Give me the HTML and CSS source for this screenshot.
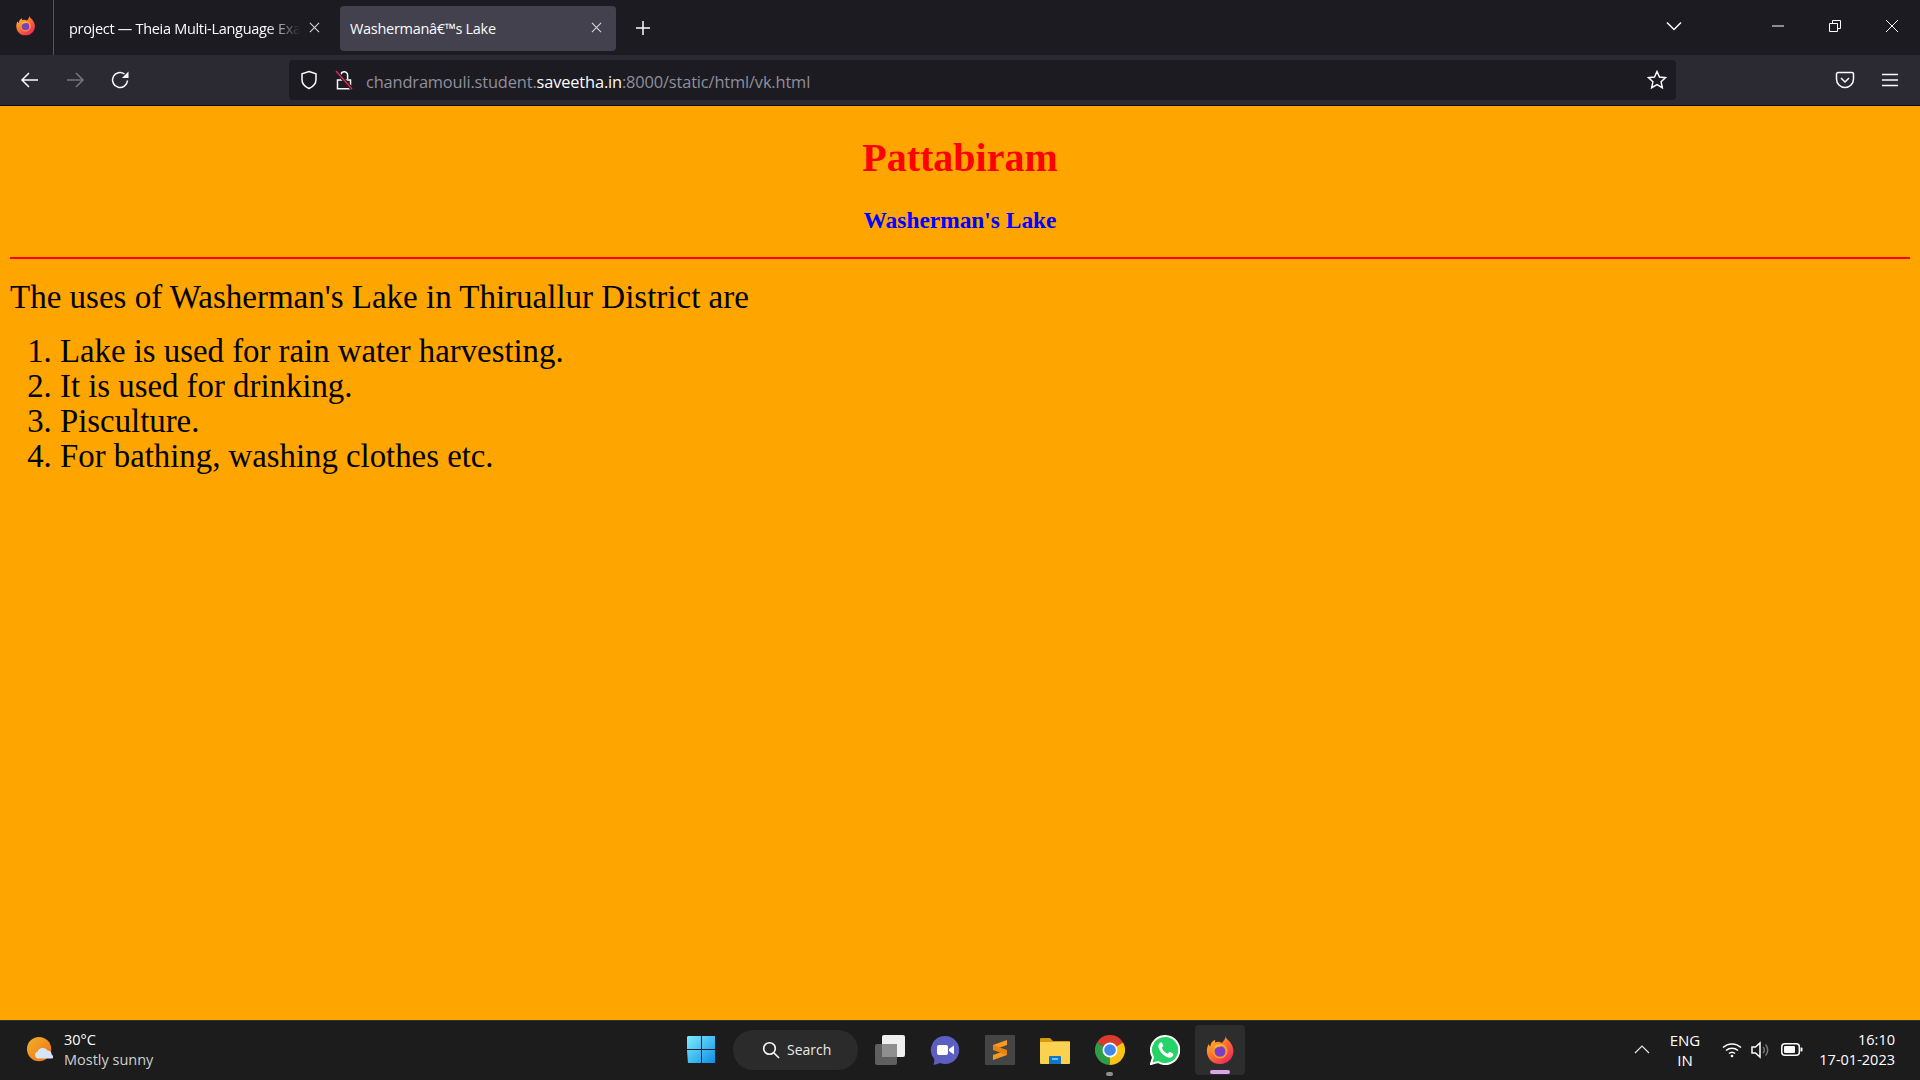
FILE: index.html
```html
<!DOCTYPE html>
<html lang="en">
<head>
    <meta charset="UTF-8">
    <title>Washerman's Lake</title>
    <link rel="stylesheet" href="styles.css">
</head>
<body>

    <!-- browser tabs -->
    <div class="tabbar">
        <div class="app-menu">
            <svg class="icon-fx-small" viewBox="0 0 32 32"><use href="#firefox"/></svg>
        </div>
        <div class="tab">
            <span class="tab-title fade">project — Theia Multi-Language Exa</span>
            <svg class="tab-close" viewBox="0 0 12 12"><path d="M1 1l10 10M11 1L1 11"/></svg>
        </div>
        <div class="tab active">
            <span class="tab-title">Washermanâ€™s Lake</span>
            <svg class="tab-close" viewBox="0 0 12 12"><path d="M1 1l10 10M11 1L1 11"/></svg>
        </div>
        <svg class="new-tab" viewBox="0 0 16 16"><path d="M8 1v14M1 8h14"/></svg>
        <div class="tabbar-right">
            <svg class="tab-list" viewBox="0 0 16 10"><path d="M1 1.500l7 7 7-7"/></svg>
            <div class="win-buttons">
                <svg viewBox="0 0 12 12"><path d="M0 6h12"/></svg>
                <svg viewBox="0 0 12 12"><path d="M.5 3.500h8v8h-8zM3.500 3.500v-3h8v8h-3"/></svg>
                <svg viewBox="0 0 12 12"><path d="M0 0l12 12M12 0L0 12"/></svg>
            </div>
        </div>
    </div>

    <!-- toolbar with address bar -->
    <div class="toolbar">
        <div class="nav-buttons">
            <svg viewBox="0 0 20 20"><path d="M18 10H2.500M9 3l-7 7 7 7"/></svg>
            <svg class="disabled" viewBox="0 0 20 20"><path d="M2 10h15.500M11 3l7 7-7 7"/></svg>
            <svg viewBox="0 0 20 20"><path d="M17.500 10.500a7.500 7.500 0 1 1-3-6.500"/><path class="solid" d="M18.500 1.500v6.500h-6.500z"/></svg>
        </div>
        <div class="urlbar">
            <svg class="url-icon" viewBox="0 0 20 20"><path d="M10 1.500l7 2.200v6c0 4.300-3 7-7 8.800-4-1.800-7-4.500-7-8.800v-6z"/></svg>
            <svg class="url-icon lock" viewBox="0 0 20 20">
                <path d="M7 9V5a3.300 3.300 0 0 1 6.600 0v4M3.500 10h13v8.800h-13z"/>
                <path class="slash-gap" d="M2 1l16 18"/>
                <path class="slash" d="M2 1l16 18"/>
            </svg>
            <span class="url">chandramouli.student.<b>saveetha.in</b>:8000/static/html/vk.html</span>
            <svg class="url-icon star" viewBox="0 0 20 20"><path d="M10 1.500l2.500 5.500 6 .7-4.400 4.100 1.200 5.900-5.300-3-5.300 3 1.200-5.900L1.500 7.700l6-.7z"/></svg>
        </div>
        <div class="toolbar-right">
            <svg viewBox="0 0 20 20"><path d="M3 2.500h14a1.500 1.500 0 0 1 1.500 1.500v5a8.500 8.500 0 0 1-17 0V4A1.500 1.500 0 0 1 3 2.500z"/><path d="M6 8l4 4 4-4"/></svg>
            <svg viewBox="0 0 20 20"><path d="M2 4.500h16M2 10h16M2 15.500h16"/></svg>
        </div>
    </div>

    <!-- the page itself -->
    <main class="page">
        <h1>Pattabiram</h1>
        <h3>Washerman's Lake</h3>
        <hr>
        <p class="intro">The uses of Washerman's Lake in Thiruallur District are</p>
        <ol class="uses">
            <li>Lake is used for rain water harvesting.</li>
            <li>It is used for drinking.</li>
            <li>Pisculture.</li>
            <li>For bathing, washing clothes etc.</li>
        </ol>
    </main>

    <!-- windows taskbar -->
    <footer class="taskbar">
        <div class="weather">
            <svg class="weather-icon" viewBox="0 0 30 30">
                <defs>
                    <linearGradient id="sun" x1="0" y1="0" x2="1" y2="1">
                        <stop offset="0" stop-color="#f0b32c"/>
                        <stop offset="1" stop-color="#f26c12"/>
                    </linearGradient>
                </defs>
                <circle cx="14" cy="14" r="13" fill="url(#sun)"/>
                <path d="M12 24a4 4 0 0 1 .5-7.500 6 6 0 0 1 10.500-1 4.500 4.500 0 0 1 4.500 4.300 3.200 3.200 0 0 1 1 4.200z" fill="#d5e4f7"/>
            </svg>
            <div class="weather-text">
                <div class="temp">30°C</div>
                <div class="sky">Mostly sunny</div>
            </div>
        </div>

        <div class="task-icons">
            <svg class="start" viewBox="0 0 30 30">
                <defs>
                    <linearGradient id="win" x1="0" y1="0" x2="1" y2="1">
                        <stop offset="0" stop-color="#7fecfd"/>
                        <stop offset="1" stop-color="#0b8fe6"/>
                    </linearGradient>
                </defs>
                <path fill="url(#win)" d="M1 1h13.500v13.500H0V2zM15.500 1H29v13.500H15.500zM0 15.500h14.500V29H1zM15.500 15.500H29V29H15.500z"/>
            </svg>
            <div class="search">
                <svg viewBox="0 0 18 18"><circle cx="7.500" cy="7.500" r="5.800"/><path d="M12 12l5 5"/></svg>
                <span>Search</span>
            </div>
            <svg class="app" viewBox="0 0 30 30">
                <rect x="0" y="9" width="22" height="21" rx="2" fill="#5f5f5f"/>
                <rect x="7" y="0" width="23" height="22" rx="2" fill="#efefef"/>
                <rect x="7" y="9" width="15" height="13" fill="#8f8f8f"/>
            </svg>
            <svg class="app" viewBox="0 0 30 30">
                <path d="M15 1a14 14 0 1 1-5 27c-2 1-5 2-7 1.500 1-1 1.500-3 1.200-5.500A14 14 0 0 1 15 1z" fill="#5d5fc0"/>
                <rect x="7" y="10" width="11" height="10" rx="2" fill="#fff"/>
                <path d="M19 14l5-3.500v9L19 16z" fill="#fff"/>
            </svg>
            <svg class="app" viewBox="0 0 30 30">
                <rect width="30" height="30" rx="1" fill="#454545"/>
                <path d="M22 5v5L8 15v-5zM22 15v5L8 25v-5z" fill="#f79a1f"/>
                <path d="M8 10v5l14 5v-5z" fill="#e8830f"/>
            </svg>
            <svg class="app" viewBox="0 0 30 30">
                <path d="M0 4a1 1 0 0 1 1-1h9l3 3h16a1 1 0 0 1 1 1v3H0z" fill="#d99a0c"/>
                <path d="M0 7h30v21a1 1 0 0 1-1 1H1a1 1 0 0 1-1-1z" fill="#fcd14f"/>
                <path d="M9 22a1 1 0 0 1 1-1h10a1 1 0 0 1 1 1v7H9z" fill="#0f78c8"/>
                <path d="M12 24h6" stroke="#9bd3f5" stroke-width="1.500"/>
            </svg>
            <div class="app-wrap">
                <svg class="app" viewBox="0 0 30 30">
                    <path d="M15 15L27.990 7.500A15 15 0 0 0 2 7.500z" fill="#dd3a2e"/>
                    <path d="M15 15L2 7.500A15 15 0 0 0 15 30z" fill="#2f9c46"/>
                    <path d="M15 15l13-7.500A15 15 0 0 1 15 30z" fill="#fbc216"/>
                    <circle cx="15" cy="15" r="7.500" fill="#fff"/>
                    <circle cx="15" cy="15" r="5.800" fill="#3f86ee"/>
                </svg>
                <span class="dot"></span>
            </div>
            <svg class="app" viewBox="0 0 30 30">
                <path d="M15 1a14 14 0 1 1-7 26l-7 2 2-6.800A14 14 0 0 1 15 1z" fill="#25d366" stroke="#fff" stroke-width="2"/>
                <path d="M10.500 7.500c-1.500 1-2.500 2.500-2 5 1 4 5.500 9 10 10 2.500.5 4-.5 5-2.500l-.5-1.500-3.500-1.700-1.800 2c-2.500-.7-5-3.500-6-6l1.700-1.700-1.500-3.700z" fill="#fff"/>
            </svg>
            <div class="app-wrap running">
                <svg class="app" viewBox="0 0 32 32"><use href="#firefox"/></svg>
                <span class="bar"></span>
            </div>
        </div>

        <div class="tray">
            <svg class="tray-caret" viewBox="0 0 16 9"><path d="M1 8l7-7 7 7"/></svg>
            <div class="lang">ENG<br>IN</div>
            <svg class="wifi" viewBox="0 0 20 16"><path d="M1 5.500a13 13 0 0 1 18 0M4 8.500a9 9 0 0 1 12 0M7 11.500a4.500 4.500 0 0 1 6 0"/><circle class="solid" cx="10" cy="14" r="1.300"/></svg>
            <svg class="volume" viewBox="0 0 20 18"><path d="M1 6h3.500L9 2v14l-4.500-4H1z"/><path class="faint" d="M12 6a4 4 0 0 1 0 6M14.500 3.500a8 8 0 0 1 0 11"/></svg>
            <svg class="battery" viewBox="0 0 22 13"><rect x=".8" y=".8" width="17.500" height="11.400" rx="3"/><rect class="solid" x="3" y="3" width="11" height="7" rx="1"/><path class="solid" d="M19.500 4.500h1a1 1 0 0 1 1 1v2a1 1 0 0 1-1 1h-1z"/></svg>
            <div class="clock">16:10<br>17-01-2023</div>
        </div>
    </footer>

    <!-- firefox logo, used twice -->
    <svg class="defs" width="0" height="0">
        <defs>
            <linearGradient id="fx-outer" x1="0" y1="0" x2="0.8" y2="1">
                <stop offset="0" stop-color="#ffd43a"/>
                <stop offset="0.45" stop-color="#ff7a2a"/>
                <stop offset="1" stop-color="#e8255f"/>
            </linearGradient>
            <symbol id="firefox" viewBox="0 0 32 32">
                <path d="M22 1c0 3 3 4 5 7 3 4 4 8 3 12-1.500 7-7.500 11-14 11C8 31 2 25 2 17c0-3 .8-5.500 2-7.500.3 1.500 1 2.500 1.500 3C6 8.500 8 6 11 5c-.5 1.500-.5 2.500 0 3 2-1 5-1 7 .5 1.500-2 4-4 4-7.500z" fill="url(#fx-outer)"/>
                <circle cx="16" cy="17" r="8" fill="#ff9a2a"/>
                <circle cx="16" cy="17.500" r="5.800" fill="#7b3fc4"/>
                <path d="M10 12c3-3 8-3 11 0-2-.8-3.500-.6-5 .5-2 0-4 .5-5 2z" fill="#ffb72b"/>
            </symbol>
        </defs>
    </svg>

</body>
</html>
```

FILE: styles.css
```css
* {
    box-sizing: border-box;
}

html, body {
    margin: 0;
    height: 100%;
}

body {
    display: flex;
    flex-direction: column;
    overflow: hidden;
    font-family: "Open Sans", "Noto Sans", sans-serif;
    background-color: #ffa500;
}

svg {
    display: block;
    flex: none;
    fill: none;
    stroke: #fbfbfe;
    stroke-width: 1.5;
}

.solid {
    fill: currentColor;
    stroke: none;
    color: #fbfbfe;
}

.defs {
    position: absolute;
}

/* --- Tab bar --- */
.tabbar {
    height: 55px;
    flex: none;
    display: flex;
    align-items: center;
    background-color: #1c1b22;
    color: #fbfbfe;
}

.app-menu {
    width: 54px;
    height: 55px;
    padding: 15px 0 0 15px;
    border-right: 1px solid #55545b;
}

.icon-fx-small {
    width: 21px;
    height: 21px;
    stroke: none;
}

.tab {
    width: 286px;
    height: 45px;
    margin-top: 1px;
    padding: 0 20px 0 15px;
    display: flex;
    align-items: center;
    justify-content: space-between;
    font-size: 14.5px;
    border-radius: 4px;
}

.tab.active {
    width: 276px;
    padding: 0 14px 0 10px;
    background-color: #42414d;
}

.tab-title {
    white-space: nowrap;
    overflow: hidden;
    letter-spacing: -0.3px;
}

.tab-title.fade {
    width: 236px;
    -webkit-mask-image: linear-gradient(to right, #000 84%, transparent 98%);
    mask-image: linear-gradient(to right, #000 84%, transparent 98%);
}

.tab-close {
    width: 11px;
    height: 11px;
    margin-top: -2px;
    stroke: #d5d5d8;
    stroke-width: 1.2;
}

.new-tab {
    width: 16px;
    height: 16px;
    margin-left: 19px;
}

.tabbar-right {
    margin-left: auto;
    display: flex;
    align-items: center;
}

.tab-list {
    width: 16px;
    height: 10px;
    margin-right: 90px;
    margin-top: -4px;
}

.win-buttons {
    display: flex;
    gap: 45px;
    margin-right: 22px;
    margin-top: -4px;
}

.win-buttons svg {
    width: 12px;
    height: 12px;
    stroke-width: 1;
}

/* --- Toolbar --- */
.toolbar {
    height: 51px;
    flex: none;
    display: flex;
    align-items: center;
    background-color: #2b2a33;
    border-bottom: 1px solid #0c0c0d;
    padding-bottom: 1px;
}

.nav-buttons {
    width: 289px;
    padding-left: 20px;
    display: flex;
    gap: 25px;
}

.nav-buttons svg,
.toolbar-right svg {
    width: 20px;
    height: 20px;
}

.nav-buttons .disabled {
    stroke: #77767c;
}

.urlbar {
    width: 1387px;
    height: 40px;
    padding: 0 9px 0 10px;
    display: flex;
    align-items: center;
    background-color: #1c1b22;
    border-radius: 4px;
}

.url-icon {
    width: 20px;
    height: 20px;
}

.lock {
    margin-left: 15px;
}

.slash {
    stroke: #e22850;
    stroke-width: 1.4;
}

.slash-gap {
    stroke: #1c1b22;
    stroke-width: 3.5;
}

.url {
    margin: 3px 0 0 12px;
    font-size: 16.4px;
    color: #8f8f9d;
    letter-spacing: -0.15px;
}

.url b {
    font-weight: normal;
    color: #fbfbfe;
}

.star {
    margin-left: auto;
}

.toolbar-right {
    flex: 1;
    padding-left: 159px;
    display: flex;
    gap: 25px;
}

/* --- Page content --- */
.page {
    flex: 1;
    min-height: 0;
    padding: 0 10px;
    background-color: #ffa500;
    font-family: "Liberation Serif", "Times New Roman", serif;
}

.page h1 {
    margin: 0;
    padding-top: 29px;
    font-size: 40px;
    line-height: 46px;
    text-align: center;
    color: #ff0000;
}

.page h3 {
    margin: 0;
    padding-top: 26px;
    font-size: 23.4px;
    line-height: 27px;
    text-align: center;
    color: #0000ff;
}

.page hr {
    height: 2px;
    margin: 23px 0 0;
    border: 0;
    background-color: #ff0000;
}

.intro {
    margin: 21px 0 0;
    font-size: 33px;
    line-height: 34px;
    color: #000;
}

.uses {
    margin: 20px 0 0;
    padding-left: 50px;
    font-size: 32.8px;
    line-height: 35px;
    color: #000;
}

/* --- Taskbar --- */
.taskbar {
    height: 60px;
    flex: none;
    display: grid;
    grid-template-columns: 687px 558px 1fr;
    align-items: center;
    padding-bottom: 2px;
    background-color: #1c1c1c;
    border-top: 1px solid #333;
    color: #fff;
}

.weather {
    display: flex;
    align-items: center;
    gap: 10px;
    padding-left: 26px;
}

.weather-icon {
    width: 28px;
    height: 28px;
    stroke: none;
}

.weather-text {
    font-size: 14.5px;
    line-height: 20px;
}

.sky {
    color: #d0d0d0;
}

.task-icons {
    display: flex;
    align-items: center;
    height: 100%;
}

.start {
    width: 29px;
    height: 29px;
    stroke: none;
    margin-right: 17px;
}

.search {
    width: 125px;
    height: 40px;
    margin-right: 17px;
    padding-left: 29px;
    display: flex;
    align-items: center;
    gap: 7px;
    font-size: 14px;
    color: #e8e8e8;
    background-color: #2b2b2b;
    border-radius: 20px;
}

.search svg {
    width: 18px;
    height: 18px;
    stroke-width: 1.6;
}

.app {
    width: 30px;
    height: 30px;
    stroke: none;
    margin-right: 25px;
}

.app-wrap {
    position: relative;
    flex: none;
}

.app-wrap .dot {
    position: absolute;
    left: 11px;
    bottom: -11px;
    width: 7px;
    height: 4px;
    border-radius: 2px;
    background-color: #8f8f8f;
}

.running {
    width: 50px;
    height: 50px;
    margin-left: -10px;
    padding: 10px;
    background-color: #2d2d2d;
    border-radius: 4px;
}

.running .app {
    margin: 0;
}

.running .bar {
    position: absolute;
    left: 15px;
    bottom: 1px;
    width: 20px;
    height: 4px;
    border-radius: 2px;
    background-color: #d8a6e6;
}

.tray {
    display: flex;
    align-items: center;
    padding-left: 389px;
}

.tray-caret {
    width: 16px;
    height: 9px;
    stroke: #e8e8e8;
    stroke-width: 1.2;
}

.lang {
    width: 50px;
    margin-left: 10px;
    font-size: 15px;
    line-height: 20px;
    text-align: center;
}

.wifi {
    width: 20px;
    height: 16px;
    margin-left: 12px;
}

.volume {
    width: 20px;
    height: 18px;
    margin-left: 9px;
}

.volume .faint {
    stroke: #777;
}

.battery {
    width: 22px;
    height: 13px;
    margin-left: 10px;
}

.clock {
    margin-left: 13px;
    width: 79px;
    font-size: 14.5px;
    line-height: 20px;
    text-align: right;
    white-space: nowrap;
}
```
